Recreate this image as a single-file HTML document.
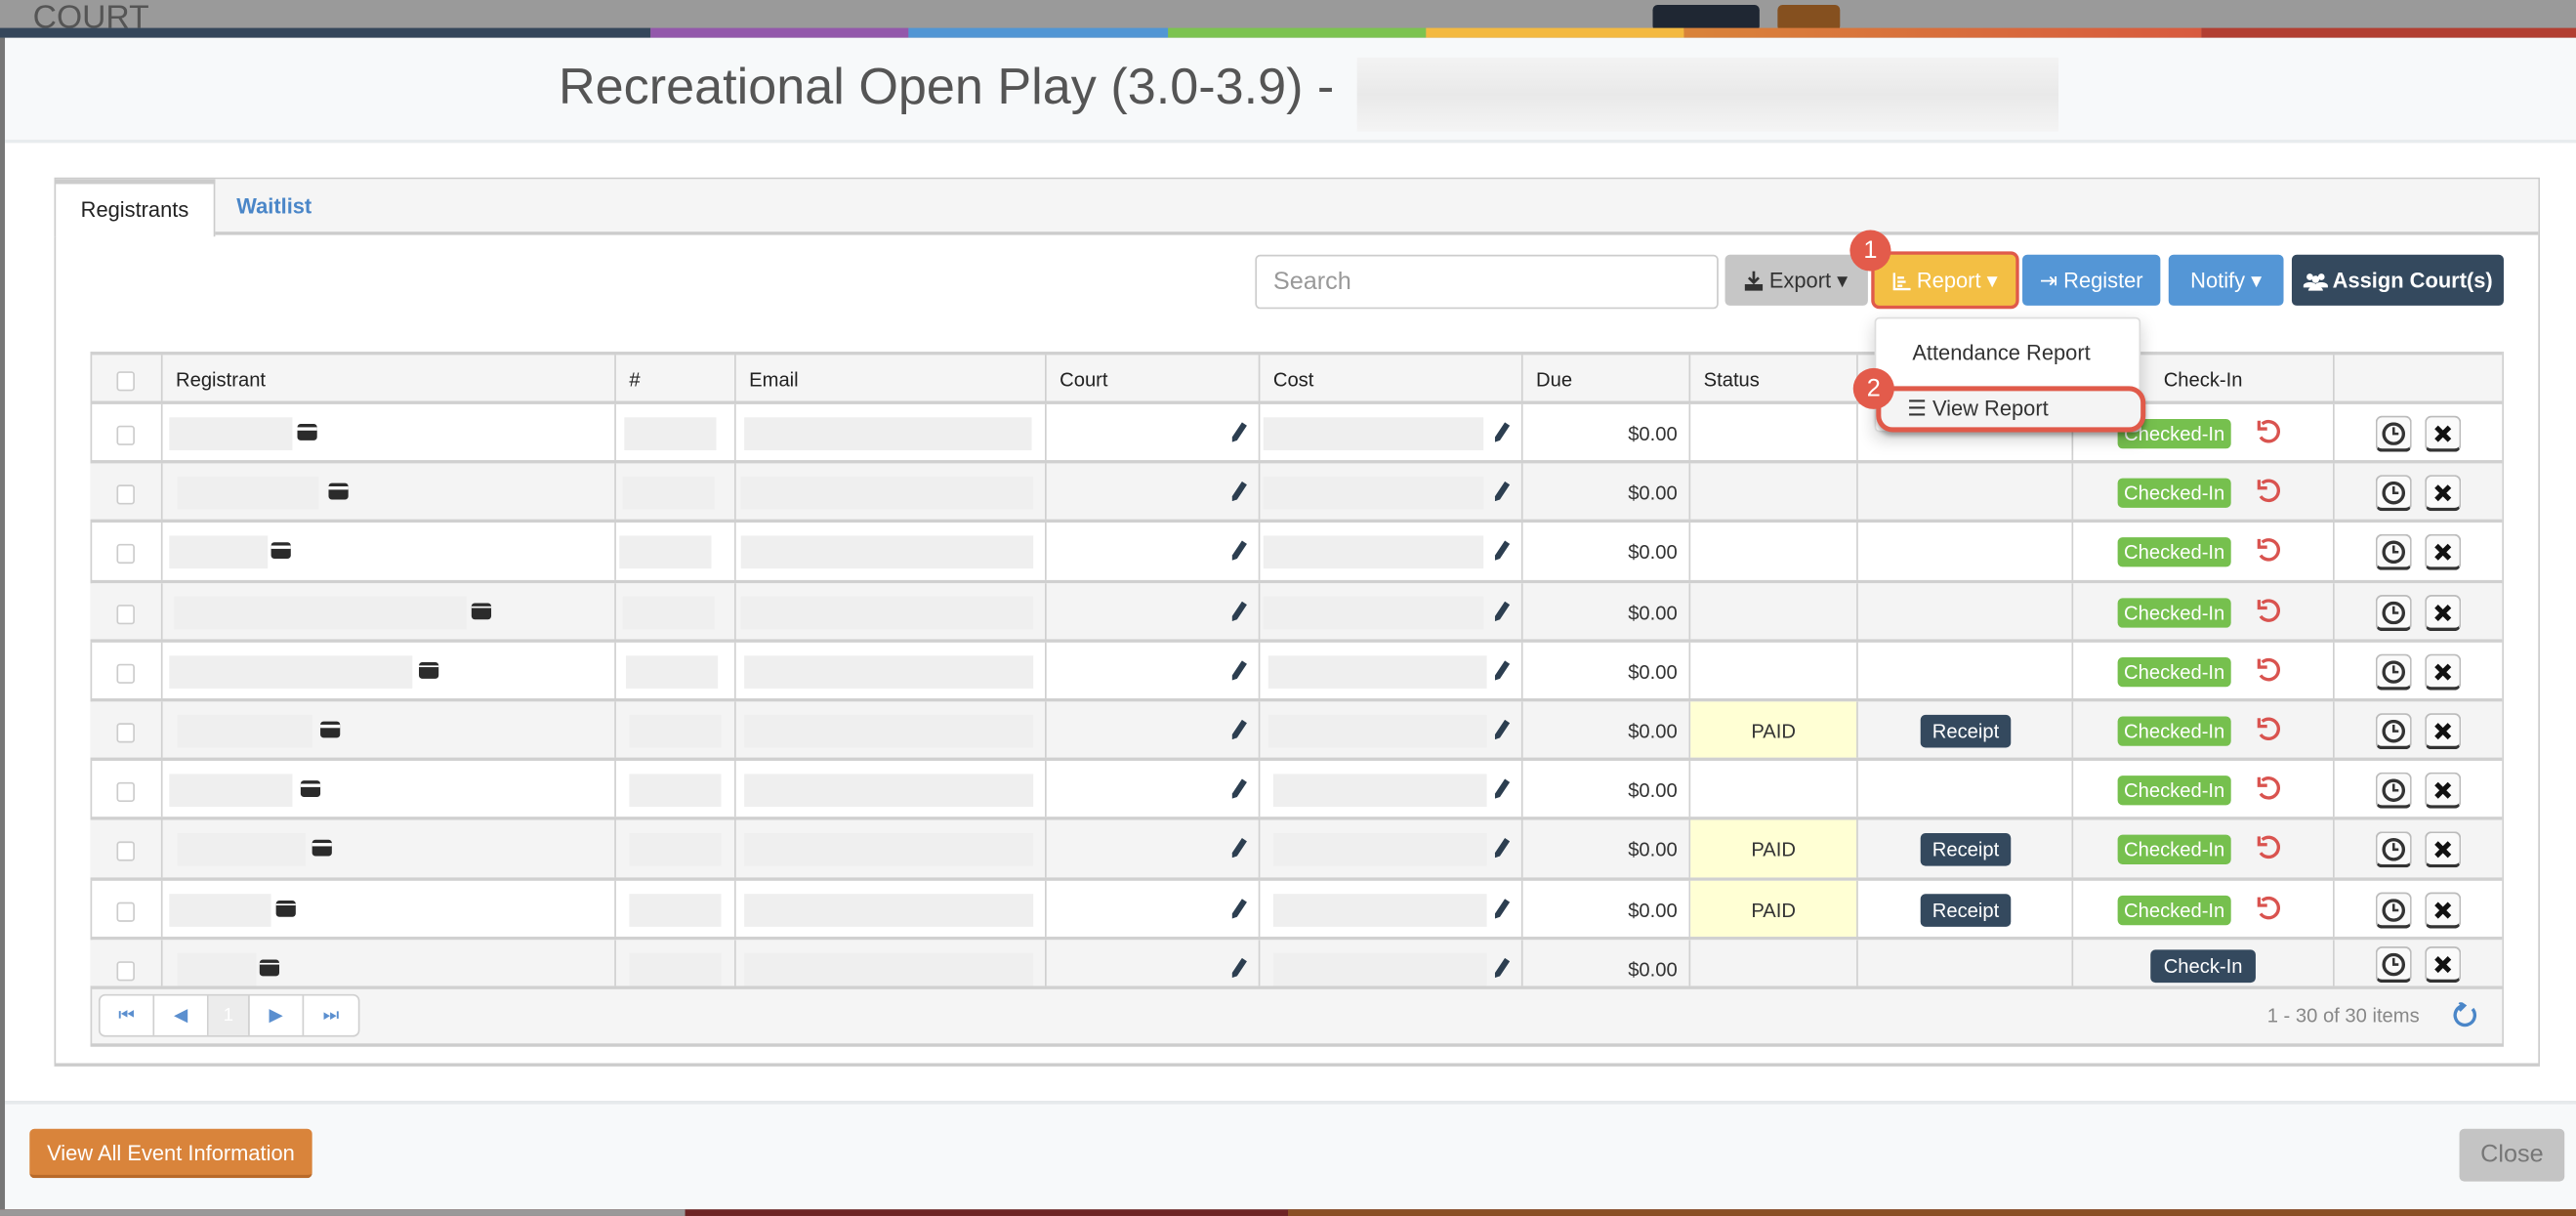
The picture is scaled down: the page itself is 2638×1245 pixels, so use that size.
<!DOCTYPE html>
<html><head><meta charset="utf-8"><style>
*{box-sizing:border-box;margin:0;padding:0}
html,body{width:2638px;height:1244px;overflow:hidden;background:#9a9a9a}
#w{position:absolute;left:0;top:0;width:1568px;height:740px;transform:scale(1.68240);transform-origin:0 0;font-family:"Liberation Sans",Arial,sans-serif;color:#333}
.a{position:absolute}
.strip div{position:absolute;top:0;height:6px}
.hdr{left:3px;top:23px;width:1565px;height:64px;background:#f7f9fa;border-bottom:2px solid #e8ecee}
.title{left:340px;top:35px;font-size:31px;color:#555;white-space:nowrap}
.body{left:3px;top:87px;width:1565px;height:583px;background:#fff}
.panel{left:33px;top:108px;width:1513px;height:541px;border:1px solid #ccc;border-bottom:2px solid #ccc;background:#fff}
.tabbar{left:0;top:0;width:1511px;height:34px;background:#f5f5f5;border-bottom:2px solid #ccc}
.btn{position:absolute;top:155px;height:31px;border-radius:3px;color:#fff;font-size:13px;line-height:31px;text-align:center;white-space:nowrap}
.btn svg{vertical-align:-2px}
.row{position:absolute;left:55px;width:1468px;height:36.2px;display:flex;border-bottom:2px solid #d0d0d0}
.row>div{border-right:1.5px solid #d0d0d0;position:relative;height:100%;flex:none}
.row>div:last-child{border-right:none}
.g{background:#f4f4f4}
.w0{width:44px}.w1{width:276px}.w2{width:73px}.w3{width:189px}.w4{width:130px}.w5{width:160px}.w6{width:102px}.w7{width:102px}.w8{width:131px}.w9{width:159px}.w10{width:102px}
.cb{position:absolute;left:16px;top:13px;width:11px;height:12px;border:1px solid #ccc;border-radius:2px;background:#fff}
.bl{position:absolute;top:8px;height:20px;background:#efefef}
.cc{position:absolute;top:12px;width:12px;height:10px;background:#2b2b2b;border-radius:2px}
.cc:after{content:"";position:absolute;left:0;top:2px;width:12px;height:1.5px;background:#fff}
.pen{position:absolute;top:11px}
.due{position:absolute;right:7px;top:11px;font-size:12px}
.paid{background:#ffffd4;text-align:center;font-size:12px;line-height:36px}
.rc{position:absolute;left:38px;top:8px;width:55px;height:20px;background:#34495e;color:#fff;border-radius:3px;font-size:12px;line-height:20px;text-align:center}
.ck{position:absolute;left:27px;top:9px;width:69px;height:18px;background:#76c04e;color:#fff;border-radius:3px;font-size:12px;line-height:18px;text-align:center}
.un{position:absolute;left:112px;top:9px}
.ib{position:absolute;top:7px;width:22px;height:22px;border:1px solid #bbb;border-bottom:2px solid #333;border-radius:4px;background:#fafafa}
.ib svg{position:absolute;left:3px;top:3px}
</style></head><body><div id="w">

<div class="a" style="left:0;top:0;width:1568px;height:23px;background:#9a9a9a"></div>
<div class="a" style="left:20px;top:0;font-size:20px;color:#555">COURT</div>
<div class="a" style="left:1006px;top:3px;width:65px;height:16px;background:#1f2733;border-radius:3px"></div>
<div class="a" style="left:1082px;top:3px;width:38px;height:16px;background:#85501f;border-radius:3px"></div>
<div class="strip a" style="left:0;top:17px;width:1568px;height:6px">
<div style="left:0;width:396px;background:#35475b"></div>
<div style="left:396px;width:157px;background:#9358ab"></div>
<div style="left:553px;width:158px;background:#5196d4"></div>
<div style="left:711px;width:157px;background:#7cc350"></div>
<div style="left:868px;width:157px;background:#f3b940"></div>
<div style="left:1025px;width:315px;background:linear-gradient(90deg,#d9833a,#d85a3f)"></div>
<div style="left:1340px;width:228px;background:#b23f32"></div>
</div>

<div class="a" style="left:0;top:23px;width:3px;height:717px;background:#777"></div>
<div class="a hdr"></div>
<div class="a title">Recreational Open Play (3.0-3.9) -</div>
<div class="a" style="left:826px;top:35px;width:427px;height:45px;background:linear-gradient(180deg,#f3f3f3,#e9e9e9 50%,#f4f4f4)"></div>

<div class="a body"></div>
<div class="a panel">
 <div class="a tabbar"></div>
 <div class="a" style="left:-1px;top:0;width:98px;height:35px;background:#fff;border:1px solid #ccc;border-top:3px solid #ccc;border-bottom:none;font-size:13px;color:#222;line-height:31px;text-align:center">Registrants</div>
 <div class="a" style="left:110px;top:9px;font-size:13px;color:#4a86c8;font-weight:bold">Waitlist</div>
</div>

<div class="a" style="left:764px;top:155px;width:282px;height:33px;border:1px solid #ccc;border-radius:3px;background:#fff;font-size:15px;color:#999;line-height:31px;padding-left:10px">Search</div>
<div class="btn" style="left:1050px;width:87px;background:#c6c6c6;color:#333"><svg width="11" height="12" viewBox="0 0 11 12"><path d="M5.5 0v7M2.5 4l3 3 3-3" stroke="#333" stroke-width="1.6" fill="none"/><path d="M0 8v4h11V8" fill="#333"/></svg> Export ▾</div>
<div class="btn" style="left:1141px;width:86px;background:#f3bf44;box-shadow:0 0 0 2px #e05a4a"><svg width="11" height="11" viewBox="0 0 11 11"><path d="M1 0v10h10M3 3h4M3 5.5h5M3 8h3" stroke="#fff" stroke-width="1.4" fill="none"/></svg> Report ▾</div>
<div class="btn" style="left:1231px;width:84px;background:#5496d6">⇥ Register</div>
<div class="btn" style="left:1320px;width:70px;background:#5496d6">Notify ▾</div>
<div class="btn" style="left:1395px;width:129px;background:#34495e;font-weight:bold"><svg width="15" height="11" viewBox="0 0 15 11"><circle cx="4" cy="2.5" r="2" fill="#fff"/><circle cx="11" cy="2.5" r="2" fill="#fff"/><circle cx="7.5" cy="4" r="2.2" fill="#fff"/><path d="M0 8c0-3 8-3 8 0v1H0zM7 8c0-3 8-3 8 0v1H7z" fill="#fff"/><path d="M3 11c0-4 9-4 9 0z" fill="#fff"/></svg> Assign Court(s)</div>
<div class="a" style="left:1126px;top:140px;width:25px;height:25px;border-radius:50%;background:#e35b4b;color:#fff;font-size:15px;text-align:center;line-height:25px">1</div>

<div class="row" style="top:214px;height:32px;background:#f5f5f5;border-top:2px solid #d0d0d0;font-size:12px;color:#222;line-height:30px">
<div class="w0"><span class="cb" style="top:10px"></span></div>
<div class="w1" style="padding-left:8px">Registrant</div>
<div class="w2" style="padding-left:8px">#</div>
<div class="w3" style="padding-left:8px">Email</div>
<div class="w4" style="padding-left:8px">Court</div>
<div class="w5" style="padding-left:8px">Cost</div>
<div class="w6" style="padding-left:8px">Due</div>
<div class="w7" style="padding-left:8px">Status</div>
<div class="w8"></div>
<div class="w9" style="text-align:center">Check-In</div>
<div class="w10"></div>
</div>
<div class="a" style="left:55px;top:214px;width:1px;height:422px;background:#d0d0d0"></div>
<div class="a" style="left:1523px;top:214px;width:1px;height:422px;background:#d0d0d0"></div>

<div class="row" style="top:246px"><div class="w0"><span class="cb"></span></div><div class="w1"><span class="bl" style="left:4px;width:75px"></span><span class="cc" style="left:82px"></span></div><div class="w2"><span class="bl" style="left:5px;width:56px"></span></div><div class="w3"><span class="bl" style="left:5px;width:175px"></span></div><div class="w4"><svg class="pen" style="left:112px" width="10" height="12" viewBox="0 0 10 12"><path d="M7 0l3 2-6 9-3 1 0-3z" fill="#2c3e50"/></svg></div><div class="w5"><span class="bl" style="left:2px;width:134px"></span><svg class="pen" style="left:142px" width="10" height="12" viewBox="0 0 10 12"><path d="M7 0l3 2-6 9-3 1 0-3z" fill="#2c3e50"/></svg></div><div class="w6"><span class="due">$0.00</span></div><div class="w7"></div><div class="w8"></div><div class="w9"><span class="ck">Checked-In</span><svg class="un" width="14" height="16" viewBox="0 0 14 16"><path d="M3 3a6 6 0 1 1 -1 8" fill="none" stroke="#d9534f" stroke-width="2"/><path d="M1 1v5h5" fill="none" stroke="#d9534f" stroke-width="2"/></svg></div><div class="w10"><span class="ib" style="left:25px"><svg width="14" height="14" viewBox="0 0 14 14"><circle cx="7" cy="7" r="6" fill="none" stroke="#333" stroke-width="2"/><path d="M7 3v4h3" stroke="#333" stroke-width="1.5" fill="none"/></svg></span><span class="ib" style="left:55px"><svg width="14" height="14" viewBox="0 0 14 14"><path d="M3 3l8 8M11 3l-8 8" stroke="#111" stroke-width="3"/></svg></span></div></div>

<div class="row g" style="top:282.2px"><div class="w0"><span class="cb"></span></div><div class="w1"><span class="bl" style="left:9px;width:86px"></span><span class="cc" style="left:101px"></span></div><div class="w2"><span class="bl" style="left:4px;width:56px"></span></div><div class="w3"><span class="bl" style="left:3px;width:178px"></span></div><div class="w4"><svg class="pen" style="left:112px" width="10" height="12" viewBox="0 0 10 12"><path d="M7 0l3 2-6 9-3 1 0-3z" fill="#2c3e50"/></svg></div><div class="w5"><span class="bl" style="left:2px;width:134px"></span><svg class="pen" style="left:142px" width="10" height="12" viewBox="0 0 10 12"><path d="M7 0l3 2-6 9-3 1 0-3z" fill="#2c3e50"/></svg></div><div class="w6"><span class="due">$0.00</span></div><div class="w7"></div><div class="w8"></div><div class="w9"><span class="ck">Checked-In</span><svg class="un" width="14" height="16" viewBox="0 0 14 16"><path d="M3 3a6 6 0 1 1 -1 8" fill="none" stroke="#d9534f" stroke-width="2"/><path d="M1 1v5h5" fill="none" stroke="#d9534f" stroke-width="2"/></svg></div><div class="w10"><span class="ib" style="left:25px"><svg width="14" height="14" viewBox="0 0 14 14"><circle cx="7" cy="7" r="6" fill="none" stroke="#333" stroke-width="2"/><path d="M7 3v4h3" stroke="#333" stroke-width="1.5" fill="none"/></svg></span><span class="ib" style="left:55px"><svg width="14" height="14" viewBox="0 0 14 14"><path d="M3 3l8 8M11 3l-8 8" stroke="#111" stroke-width="3"/></svg></span></div></div>

<div class="row" style="top:318.4px"><div class="w0"><span class="cb"></span></div><div class="w1"><span class="bl" style="left:4px;width:60px"></span><span class="cc" style="left:66px"></span></div><div class="w2"><span class="bl" style="left:2px;width:56px"></span></div><div class="w3"><span class="bl" style="left:3px;width:178px"></span></div><div class="w4"><svg class="pen" style="left:112px" width="10" height="12" viewBox="0 0 10 12"><path d="M7 0l3 2-6 9-3 1 0-3z" fill="#2c3e50"/></svg></div><div class="w5"><span class="bl" style="left:2px;width:134px"></span><svg class="pen" style="left:142px" width="10" height="12" viewBox="0 0 10 12"><path d="M7 0l3 2-6 9-3 1 0-3z" fill="#2c3e50"/></svg></div><div class="w6"><span class="due">$0.00</span></div><div class="w7"></div><div class="w8"></div><div class="w9"><span class="ck">Checked-In</span><svg class="un" width="14" height="16" viewBox="0 0 14 16"><path d="M3 3a6 6 0 1 1 -1 8" fill="none" stroke="#d9534f" stroke-width="2"/><path d="M1 1v5h5" fill="none" stroke="#d9534f" stroke-width="2"/></svg></div><div class="w10"><span class="ib" style="left:25px"><svg width="14" height="14" viewBox="0 0 14 14"><circle cx="7" cy="7" r="6" fill="none" stroke="#333" stroke-width="2"/><path d="M7 3v4h3" stroke="#333" stroke-width="1.5" fill="none"/></svg></span><span class="ib" style="left:55px"><svg width="14" height="14" viewBox="0 0 14 14"><path d="M3 3l8 8M11 3l-8 8" stroke="#111" stroke-width="3"/></svg></span></div></div>

<div class="row g" style="top:354.6px"><div class="w0"><span class="cb"></span></div><div class="w1"><span class="bl" style="left:7px;width:178px"></span><span class="cc" style="left:188px"></span></div><div class="w2"><span class="bl" style="left:4px;width:56px"></span></div><div class="w3"><span class="bl" style="left:3px;width:178px"></span></div><div class="w4"><svg class="pen" style="left:112px" width="10" height="12" viewBox="0 0 10 12"><path d="M7 0l3 2-6 9-3 1 0-3z" fill="#2c3e50"/></svg></div><div class="w5"><span class="bl" style="left:2px;width:134px"></span><svg class="pen" style="left:142px" width="10" height="12" viewBox="0 0 10 12"><path d="M7 0l3 2-6 9-3 1 0-3z" fill="#2c3e50"/></svg></div><div class="w6"><span class="due">$0.00</span></div><div class="w7"></div><div class="w8"></div><div class="w9"><span class="ck">Checked-In</span><svg class="un" width="14" height="16" viewBox="0 0 14 16"><path d="M3 3a6 6 0 1 1 -1 8" fill="none" stroke="#d9534f" stroke-width="2"/><path d="M1 1v5h5" fill="none" stroke="#d9534f" stroke-width="2"/></svg></div><div class="w10"><span class="ib" style="left:25px"><svg width="14" height="14" viewBox="0 0 14 14"><circle cx="7" cy="7" r="6" fill="none" stroke="#333" stroke-width="2"/><path d="M7 3v4h3" stroke="#333" stroke-width="1.5" fill="none"/></svg></span><span class="ib" style="left:55px"><svg width="14" height="14" viewBox="0 0 14 14"><path d="M3 3l8 8M11 3l-8 8" stroke="#111" stroke-width="3"/></svg></span></div></div>

<div class="row" style="top:390.8px"><div class="w0"><span class="cb"></span></div><div class="w1"><span class="bl" style="left:4px;width:148px"></span><span class="cc" style="left:156px"></span></div><div class="w2"><span class="bl" style="left:6px;width:56px"></span></div><div class="w3"><span class="bl" style="left:5px;width:176px"></span></div><div class="w4"><svg class="pen" style="left:112px" width="10" height="12" viewBox="0 0 10 12"><path d="M7 0l3 2-6 9-3 1 0-3z" fill="#2c3e50"/></svg></div><div class="w5"><span class="bl" style="left:5px;width:133px"></span><svg class="pen" style="left:142px" width="10" height="12" viewBox="0 0 10 12"><path d="M7 0l3 2-6 9-3 1 0-3z" fill="#2c3e50"/></svg></div><div class="w6"><span class="due">$0.00</span></div><div class="w7"></div><div class="w8"></div><div class="w9"><span class="ck">Checked-In</span><svg class="un" width="14" height="16" viewBox="0 0 14 16"><path d="M3 3a6 6 0 1 1 -1 8" fill="none" stroke="#d9534f" stroke-width="2"/><path d="M1 1v5h5" fill="none" stroke="#d9534f" stroke-width="2"/></svg></div><div class="w10"><span class="ib" style="left:25px"><svg width="14" height="14" viewBox="0 0 14 14"><circle cx="7" cy="7" r="6" fill="none" stroke="#333" stroke-width="2"/><path d="M7 3v4h3" stroke="#333" stroke-width="1.5" fill="none"/></svg></span><span class="ib" style="left:55px"><svg width="14" height="14" viewBox="0 0 14 14"><path d="M3 3l8 8M11 3l-8 8" stroke="#111" stroke-width="3"/></svg></span></div></div>

<div class="row g" style="top:427px"><div class="w0"><span class="cb"></span></div><div class="w1"><span class="bl" style="left:9px;width:82px"></span><span class="cc" style="left:96px"></span></div><div class="w2"><span class="bl" style="left:8px;width:56px"></span></div><div class="w3"><span class="bl" style="left:5px;width:176px"></span></div><div class="w4"><svg class="pen" style="left:112px" width="10" height="12" viewBox="0 0 10 12"><path d="M7 0l3 2-6 9-3 1 0-3z" fill="#2c3e50"/></svg></div><div class="w5"><span class="bl" style="left:5px;width:133px"></span><svg class="pen" style="left:142px" width="10" height="12" viewBox="0 0 10 12"><path d="M7 0l3 2-6 9-3 1 0-3z" fill="#2c3e50"/></svg></div><div class="w6"><span class="due">$0.00</span></div><div class="w7 paid">PAID</div><div class="w8"><span class="rc">Receipt</span></div><div class="w9"><span class="ck">Checked-In</span><svg class="un" width="14" height="16" viewBox="0 0 14 16"><path d="M3 3a6 6 0 1 1 -1 8" fill="none" stroke="#d9534f" stroke-width="2"/><path d="M1 1v5h5" fill="none" stroke="#d9534f" stroke-width="2"/></svg></div><div class="w10"><span class="ib" style="left:25px"><svg width="14" height="14" viewBox="0 0 14 14"><circle cx="7" cy="7" r="6" fill="none" stroke="#333" stroke-width="2"/><path d="M7 3v4h3" stroke="#333" stroke-width="1.5" fill="none"/></svg></span><span class="ib" style="left:55px"><svg width="14" height="14" viewBox="0 0 14 14"><path d="M3 3l8 8M11 3l-8 8" stroke="#111" stroke-width="3"/></svg></span></div></div>

<div class="row" style="top:463.2px"><div class="w0"><span class="cb"></span></div><div class="w1"><span class="bl" style="left:4px;width:75px"></span><span class="cc" style="left:84px"></span></div><div class="w2"><span class="bl" style="left:8px;width:56px"></span></div><div class="w3"><span class="bl" style="left:5px;width:176px"></span></div><div class="w4"><svg class="pen" style="left:112px" width="10" height="12" viewBox="0 0 10 12"><path d="M7 0l3 2-6 9-3 1 0-3z" fill="#2c3e50"/></svg></div><div class="w5"><span class="bl" style="left:8px;width:130px"></span><svg class="pen" style="left:142px" width="10" height="12" viewBox="0 0 10 12"><path d="M7 0l3 2-6 9-3 1 0-3z" fill="#2c3e50"/></svg></div><div class="w6"><span class="due">$0.00</span></div><div class="w7"></div><div class="w8"></div><div class="w9"><span class="ck">Checked-In</span><svg class="un" width="14" height="16" viewBox="0 0 14 16"><path d="M3 3a6 6 0 1 1 -1 8" fill="none" stroke="#d9534f" stroke-width="2"/><path d="M1 1v5h5" fill="none" stroke="#d9534f" stroke-width="2"/></svg></div><div class="w10"><span class="ib" style="left:25px"><svg width="14" height="14" viewBox="0 0 14 14"><circle cx="7" cy="7" r="6" fill="none" stroke="#333" stroke-width="2"/><path d="M7 3v4h3" stroke="#333" stroke-width="1.5" fill="none"/></svg></span><span class="ib" style="left:55px"><svg width="14" height="14" viewBox="0 0 14 14"><path d="M3 3l8 8M11 3l-8 8" stroke="#111" stroke-width="3"/></svg></span></div></div>

<div class="row g" style="top:499.4px"><div class="w0"><span class="cb"></span></div><div class="w1"><span class="bl" style="left:9px;width:78px"></span><span class="cc" style="left:91px"></span></div><div class="w2"><span class="bl" style="left:8px;width:56px"></span></div><div class="w3"><span class="bl" style="left:5px;width:176px"></span></div><div class="w4"><svg class="pen" style="left:112px" width="10" height="12" viewBox="0 0 10 12"><path d="M7 0l3 2-6 9-3 1 0-3z" fill="#2c3e50"/></svg></div><div class="w5"><span class="bl" style="left:8px;width:130px"></span><svg class="pen" style="left:142px" width="10" height="12" viewBox="0 0 10 12"><path d="M7 0l3 2-6 9-3 1 0-3z" fill="#2c3e50"/></svg></div><div class="w6"><span class="due">$0.00</span></div><div class="w7 paid">PAID</div><div class="w8"><span class="rc">Receipt</span></div><div class="w9"><span class="ck">Checked-In</span><svg class="un" width="14" height="16" viewBox="0 0 14 16"><path d="M3 3a6 6 0 1 1 -1 8" fill="none" stroke="#d9534f" stroke-width="2"/><path d="M1 1v5h5" fill="none" stroke="#d9534f" stroke-width="2"/></svg></div><div class="w10"><span class="ib" style="left:25px"><svg width="14" height="14" viewBox="0 0 14 14"><circle cx="7" cy="7" r="6" fill="none" stroke="#333" stroke-width="2"/><path d="M7 3v4h3" stroke="#333" stroke-width="1.5" fill="none"/></svg></span><span class="ib" style="left:55px"><svg width="14" height="14" viewBox="0 0 14 14"><path d="M3 3l8 8M11 3l-8 8" stroke="#111" stroke-width="3"/></svg></span></div></div>

<div class="row" style="top:535.6px"><div class="w0"><span class="cb"></span></div><div class="w1"><span class="bl" style="left:4px;width:62px"></span><span class="cc" style="left:69px"></span></div><div class="w2"><span class="bl" style="left:8px;width:56px"></span></div><div class="w3"><span class="bl" style="left:5px;width:176px"></span></div><div class="w4"><svg class="pen" style="left:112px" width="10" height="12" viewBox="0 0 10 12"><path d="M7 0l3 2-6 9-3 1 0-3z" fill="#2c3e50"/></svg></div><div class="w5"><span class="bl" style="left:8px;width:130px"></span><svg class="pen" style="left:142px" width="10" height="12" viewBox="0 0 10 12"><path d="M7 0l3 2-6 9-3 1 0-3z" fill="#2c3e50"/></svg></div><div class="w6"><span class="due">$0.00</span></div><div class="w7 paid">PAID</div><div class="w8"><span class="rc">Receipt</span></div><div class="w9"><span class="ck">Checked-In</span><svg class="un" width="14" height="16" viewBox="0 0 14 16"><path d="M3 3a6 6 0 1 1 -1 8" fill="none" stroke="#d9534f" stroke-width="2"/><path d="M1 1v5h5" fill="none" stroke="#d9534f" stroke-width="2"/></svg></div><div class="w10"><span class="ib" style="left:25px"><svg width="14" height="14" viewBox="0 0 14 14"><circle cx="7" cy="7" r="6" fill="none" stroke="#333" stroke-width="2"/><path d="M7 3v4h3" stroke="#333" stroke-width="1.5" fill="none"/></svg></span><span class="ib" style="left:55px"><svg width="14" height="14" viewBox="0 0 14 14"><path d="M3 3l8 8M11 3l-8 8" stroke="#111" stroke-width="3"/></svg></span></div></div>

<div class="row g" style="top:571.8px;height:28.2px;overflow:hidden;border-bottom:none"><div class="w0"><span class="cb"></span></div><div class="w1"><span class="bl" style="left:9px;width:48px"></span><span class="cc" style="left:59px"></span></div><div class="w2"><span class="bl" style="left:8px;width:56px"></span></div><div class="w3"><span class="bl" style="left:5px;width:176px"></span></div><div class="w4"><svg class="pen" style="left:112px" width="10" height="12" viewBox="0 0 10 12"><path d="M7 0l3 2-6 9-3 1 0-3z" fill="#2c3e50"/></svg></div><div class="w5"><span class="bl" style="left:8px;width:130px"></span><svg class="pen" style="left:142px" width="10" height="12" viewBox="0 0 10 12"><path d="M7 0l3 2-6 9-3 1 0-3z" fill="#2c3e50"/></svg></div><div class="w6"><span class="due">$0.00</span></div><div class="w7"></div><div class="w8"></div><div class="w9"><span class="rc" style="left:47px;width:64px;top:6px">Check-In</span></div><div class="w10"><span class="ib" style="left:25px;top:4px"><svg width="14" height="14" viewBox="0 0 14 14"><circle cx="7" cy="7" r="6" fill="none" stroke="#333" stroke-width="2"/><path d="M7 3v4h3" stroke="#333" stroke-width="1.5" fill="none"/></svg></span><span class="ib" style="left:55px;top:4px"><svg width="14" height="14" viewBox="0 0 14 14"><path d="M3 3l8 8M11 3l-8 8" stroke="#111" stroke-width="3"/></svg></span></div></div>

<div class="a" style="left:55px;top:600px;width:1469px;height:37px;background:#f5f5f5;border-top:2px solid #d0d0d0;border-bottom:2px solid #ccc;border-left:1px solid #d0d0d0;border-right:1px solid #d0d0d0"></div>
<div class="a" style="left:60px;top:605px;width:159px;height:26px;border:1px solid #d0d0d0;border-radius:4px;background:#fff;display:flex;font-size:11px;color:#5b8fcf;line-height:24px">
<div style="width:33px;text-align:center;border-right:1px solid #d0d0d0">⏮</div><div style="width:33px;text-align:center;border-right:1px solid #d0d0d0">◀</div><div style="width:25px;text-align:center;background:#ececec;color:#fff;border-right:1px solid #d0d0d0">1</div><div style="width:33px;text-align:center;border-right:1px solid #d0d0d0">▶</div><div style="width:33px;text-align:center">⏭</div></div>
<div class="a" style="left:1380px;top:611px;font-size:12px;color:#888">1 - 30 of 30 items</div>
<svg class="a" style="left:1493px;top:610px" width="16" height="16" viewBox="0 0 16 16"><path d="M12 4a6 6 0 1 1 -6 -2" fill="none" stroke="#4a86c8" stroke-width="2"/><path d="M4 0l3 2-3 3" fill="none" stroke="#4a86c8" stroke-width="2"/></svg>

<div class="a" style="left:1141px;top:193px;width:162px;height:70px;background:#fff;border:1px solid #ddd;border-radius:3px;box-shadow:0 4px 10px rgba(0,0,0,.18)"></div>
<div class="a" style="left:1164px;top:207px;font-size:13px;color:#333">Attendance Report</div>
<div class="a" style="left:1142px;top:235px;width:164px;height:28px;border:3px solid #e05a4a;border-radius:10px;background:#f4f4f4;font-size:13px;color:#333;line-height:22px;padding-left:16px;box-shadow:0 2px 3px rgba(0,0,0,.3)">☰ View Report</div>
<div class="a" style="left:1128px;top:224px;width:25px;height:25px;border-radius:50%;background:#e35b4b;color:#fff;font-size:15px;text-align:center;line-height:25px">2</div>

<div class="a" style="left:3px;top:670px;width:1565px;height:66px;background:#f7f9fa;border-top:2px solid #e6eaec"></div>
<div class="a" style="left:18px;top:687px;width:172px;height:30px;background:#d9843b;border-radius:3px;color:#fff;font-size:13px;line-height:29px;text-align:center;border-bottom:2px solid #b86a2a">View All Event Information</div>
<div class="a" style="left:1497px;top:687px;width:64px;height:32px;background:#c4c4c4;border-radius:3px;color:#777;font-size:15px;line-height:32px;text-align:center">Close</div>
<div class="a" style="left:0;top:736px;width:1568px;height:4px;background:#6e2424"></div>
<div class="a" style="left:0;top:736px;width:417px;height:4px;background:#999"></div>
<div class="a" style="left:784px;top:736px;width:784px;height:4px;background:#8a5025"></div>
</div></body></html>
